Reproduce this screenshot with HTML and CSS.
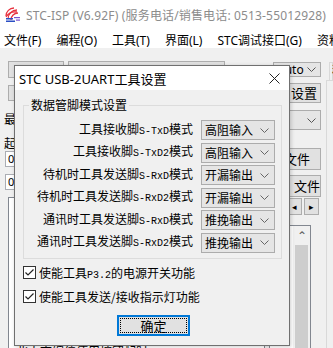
FILE: index.html
```html
<!DOCTYPE html>
<html lang="zh-CN">
  <head>
    <meta charset="UTF-8" />
    <title>STC-ISP</title>
    <link rel="stylesheet" href="styles.css">
  </head>
  <body>
    <div class="app">
      <div class="titlebar">
        <svg class="logo" width="16" height="16" viewBox="0 0 16 16">
          <path d="M1 9 A8 8 0 0 1 9 1" fill="none" stroke="#e8323f" stroke-width="1.3" />
          <path d="M1 6 A11 11 0 0 1 12 1" fill="none" stroke="#e8323f" stroke-width="1.3" transform="translate(0 4)" />
          <path d="M3 12 A9 9 0 0 1 12 3" fill="none" stroke="#e8323f" stroke-width="1.3" />
          <path d="M6 13 A7 7 0 0 1 13 6" fill="none" stroke="#e8323f" stroke-width="1.3" />
          <rect x="1" y="11" width="7" height="1.5" fill="#2b4fc4" />
          <rect x="1" y="13.5" width="9" height="1.5" fill="#2b4fc4" />
          <rect x="9" y="10" width="6" height="1.2" fill="#7a4fd0" />
          <rect x="11" y="12.5" width="4" height="1.2" fill="#7a4fd0" />
        </svg>
        <span class="apptitle">STC-ISP (V6.92F) (服务电话/销售电话: 0513-55012928)</span>
      </div>
      <div class="menubar">
        <span>文件(F)</span>
        <span>编程(O)</span>
        <span>工具(T)</span>
        <span>界面(L)</span>
        <span>STC调试接口(G)</span>
        <span>资料</span>
      </div>

      <div class="workspace">
        <div class="col-left">
          <div class="ctl-row">
            <div class="wbtn w56"></div>
            <div class="wbtn w157"></div>
          </div>
          <div class="ctl-row r2">
            <div class="wbtn w60"></div>
          </div>
          <div class="lbl l1">最低波特</div>
          <div class="lbl l2">起始地址</div>
          <div class="field f1">0x0000</div>
          <div class="field f2">0x0000</div>
          <div class="listbox">
            <div>&nbsp;</div><div>&nbsp;</div><div>&nbsp;</div><div>&nbsp;</div><div>&nbsp;</div>
            <div>&nbsp;</div><div>&nbsp;</div><div>&nbsp;</div><div>&nbsp;</div>
            <div>北大志编位使用按钮配时</div>
          </div>
        </div>

        <div class="col-right">
          <div class="wsel s1"><span>Auto</span><svg width="9" height="5" viewBox="0 0 9 5"><path d="M0.5 0.5 L4.5 4.5 L8.5 0.5" fill="none" stroke="#555" /></svg></div>
          <div class="wbtn b1">设置</div>
          <div class="wsel s2"><span></span><svg width="9" height="5" viewBox="0 0 9 5"><path d="M0.5 0.5 L4.5 4.5 L8.5 0.5" fill="none" stroke="#555" /></svg></div>
          <div class="wbtn b2">文件</div>
          <div class="wbtn b3">文件</div>
          <div class="arrows">
            <div class="abtn">&#9666;</div>
            <div class="abtn">&#9656;</div>
          </div>
          <div class="logbox">
            <div class="vscroll">
              <div class="sup">&#8963;</div>
              <div class="thumb"></div>
            </div>
          </div>
        </div>

        <div class="col-far">
          <div class="tab">程序</div>
          <div class="tabpanel">
            <div class="panelbox"></div>
          </div>
        </div>
      </div>

      <div class="dialog">
        <div class="dlg-title">
          <span>STC USB-2UART工具设置</span>
          <svg class="close" width="11" height="11" viewBox="0 0 11 11">
            <path d="M0.5 0.5 L10.5 10.5 M10.5 0.5 L0.5 10.5" stroke="#222" stroke-width="1" />
          </svg>
        </div>
        <div class="dlg-body">
          <fieldset class="group">
            <legend>数据管脚模式设置</legend>
            <div class="rows">
              <div class="row">
                <span class="rlabel">工具接收脚<span class="en">S-TxD</span>模式</span>
                <div class="combo"><span>高阻输入</span><svg width="9" height="5" viewBox="0 0 9 5"><path d="M0.5 0.5 L4.5 4.5 L8.5 0.5" fill="none" stroke="#666" /></svg></div>
              </div>
              <div class="row">
                <span class="rlabel">工具接收脚<span class="en">S-TxD2</span>模式</span>
                <div class="combo"><span>高阻输入</span><svg width="9" height="5" viewBox="0 0 9 5"><path d="M0.5 0.5 L4.5 4.5 L8.5 0.5" fill="none" stroke="#666" /></svg></div>
              </div>
              <div class="row">
                <span class="rlabel">待机时工具发送脚<span class="en">S-RxD</span>模式</span>
                <div class="combo"><span>开漏输出</span><svg width="9" height="5" viewBox="0 0 9 5"><path d="M0.5 0.5 L4.5 4.5 L8.5 0.5" fill="none" stroke="#666" /></svg></div>
              </div>
              <div class="row">
                <span class="rlabel">待机时工具发送脚<span class="en">S-RxD2</span>模式</span>
                <div class="combo"><span>开漏输出</span><svg width="9" height="5" viewBox="0 0 9 5"><path d="M0.5 0.5 L4.5 4.5 L8.5 0.5" fill="none" stroke="#666" /></svg></div>
              </div>
              <div class="row">
                <span class="rlabel">通讯时工具发送脚<span class="en">S-RxD</span>模式</span>
                <div class="combo"><span>推挽输出</span><svg width="9" height="5" viewBox="0 0 9 5"><path d="M0.5 0.5 L4.5 4.5 L8.5 0.5" fill="none" stroke="#666" /></svg></div>
              </div>
              <div class="row">
                <span class="rlabel">通讯时工具发送脚<span class="en">S-RxD2</span>模式</span>
                <div class="combo"><span>推挽输出</span><svg width="9" height="5" viewBox="0 0 9 5"><path d="M0.5 0.5 L4.5 4.5 L8.5 0.5" fill="none" stroke="#666" /></svg></div>
              </div>
            </div>
          </fieldset>

          <div class="check">
            <span class="cbox"><svg width="11" height="11" viewBox="0 0 11 11"><path d="M1.5 5.5 L4 8 L9.5 2.5" fill="none" stroke="#222" stroke-width="1.2" /></svg></span>
            <span>使能工具<span class="en">P3.2</span>的电源开关功能</span>
          </div>
          <div class="check">
            <span class="cbox"><svg width="11" height="11" viewBox="0 0 11 11"><path d="M1.5 5.5 L4 8 L9.5 2.5" fill="none" stroke="#222" stroke-width="1.2" /></svg></span>
            <span>使能工具发送/接收指示灯功能</span>
          </div>

          <div class="okbtn">确定</div>
        </div>
      </div>
    </div>
  </body>
</html>
```

FILE: styles.css
```css
body {
  margin: 0px;
  font-family: "Noto Sans", "Noto Sans CJK SC", sans-serif;
  font-size: 12px;
  color: #000;
}
.app {
  position: relative;
  width: 333px;
  height: 348px;
  overflow: hidden;
  background-color: #f0f0f0;
}

/* main window */
.titlebar {
  display: flex;
  align-items: center;
  height: 31px;
  padding-left: 5px;
  background-color: #fff;
}
.logo {
  margin-top: -1px;
}
.apptitle {
  margin-left: 5px;
  color: #8c8c8c;
  font-size: 12px;
  line-height: 16px;
  letter-spacing: 0.15px;
  white-space: nowrap;
}
.menubar {
  display: flex;
  height: 17px;
  padding-left: 4px;
  gap: 15px;
  background-color: #fff;
  line-height: 20px;
  white-space: nowrap;
}
.workspace {
  display: flex;
  height: 300px;
}
.col-left {
  flex: 0 0 265px;
  display: flex;
  flex-direction: column;
}
.ctl-row {
  display: flex;
  gap: 4px;
  margin-top: 13px;
  padding-left: 8px;
}
.ctl-row.r2 {
  margin-top: 7px;
}
.wbtn {
  box-sizing: border-box;
  border: 1px solid #adadad;
  background-color: #e1e1e1;
  text-align: center;
  font-size: 12px;
  line-height: 15px;
  white-space: nowrap;
  overflow: hidden;
}
.w56 {
  width: 56px;
  height: 17px;
}
.w157 {
  width: 157px;
  height: 17px;
}
.w60 {
  width: 60px;
  height: 16px;
}
.lbl {
  padding-left: 4px;
  line-height: 14px;
  white-space: nowrap;
}
.l1 {
  margin-top: 12px;
}
.l2 {
  margin-top: 10px;
}
.field {
  box-sizing: border-box;
  width: 80px;
  height: 16px;
  margin-left: 5px;
  padding-left: 2px;
  border: 1px solid #abadb3;
  background-color: #fff;
  font-size: 11px;
  line-height: 14px;
}
.f2 {
  margin-top: 7px;
}
.listbox {
  flex: 1;
  margin: 7px 0 0 8px;
  padding: 2px 0 0 7px;
  border: 1px solid #828790;
  border-bottom: 0;
  background-color: #fff;
  line-height: 16px;
  font-size: 12px;
  overflow: hidden;
}
.col-right {
  flex: 0 0 48px;
  margin-left: 4px;
  display: flex;
  flex-direction: column;
  align-items: flex-end;
}
.wsel {
  box-sizing: border-box;
  display: flex;
  align-items: center;
  justify-content: space-between;
  width: 48px;
  padding: 0 4px 0 3px;
  border: 1px solid #acacac;
  background-color: #e5e5e5;
  font-size: 12px;
}
.s1 {
  height: 15px;
  margin-top: 14px;
}
.s2 {
  height: 20px;
  margin-top: 7px;
}
.b1 {
  width: 34px;
  height: 20px;
  margin-top: 6px;
  line-height: 18px;
  font-size: 13px;
}
.b2 {
  width: 48px;
  height: 22px;
  margin-top: 18px;
  line-height: 20px;
  font-size: 13px;
}
.b3 {
  width: 36px;
  height: 22px;
  margin-top: 5px;
  line-height: 20px;
  font-size: 13px;
  text-align: left;
  padding-left: 8px;
}
.arrows {
  display: flex;
  gap: 2px;
  margin: 1px 2px 0 0;
}
.abtn {
  box-sizing: border-box;
  width: 15px;
  height: 17px;
  border: 1px solid #adadad;
  background-color: #e1e1e1;
  font-size: 9px;
  line-height: 15px;
  text-align: center;
}
.logbox {
  flex: 1;
  width: 40px;
  margin: 10px 10px 0 0;
  display: flex;
  justify-content: flex-end;
  border: 1px solid #828790;
  border-bottom: 0;
  background-color: #fff;
}
.vscroll {
  width: 17px;
  display: flex;
  flex-direction: column;
  background-color: #f0f0f0;
}
.sup {
  height: 19px;
  text-align: center;
  font-size: 12px;
  line-height: 20px;
  color: #606060;
}
.thumb {
  flex: 1;
  margin: 0 2px;
  background-color: #cdcdcd;
}
.col-far {
  flex: 1 1 0;
  min-width: 0;
  margin-left: 5px;
  display: flex;
  flex-direction: column;
  overflow: hidden;
}
.tab {
  height: 18px;
  margin: 14px 0 0 3px;
  padding-left: 2px;
  border: 1px solid #d9d9d9;
  border-bottom: 0;
  box-sizing: border-box;
  font-size: 12px;
  line-height: 16px;
  white-space: nowrap;
}
.tabpanel {
  flex: 1;
  border-left: 1px solid #d9d9d9;
  border-top: 1px solid #d9d9d9;
  padding: 7px 0 0 7px;
  display: flex;
}
.panelbox {
  flex: 1;
  border: 1px solid #828790;
  border-right: 0;
  background-color: #fff;
}

/* dialog */
.dialog {
  position: absolute;
  left: 14px;
  top: 65px;
  width: 276px;
  height: 281px;
  box-sizing: border-box;
  border: 1px solid #707070;
  background-color: #f0f0f0;
  box-shadow: 1px 1px 4px rgba(0, 0, 0, 0.2);
  display: flex;
  flex-direction: column;
}
.dlg-title {
  display: flex;
  align-items: center;
  justify-content: space-between;
  height: 24px;
  padding: 0 9px 0 4px;
  background-color: #fff;
  font-size: 13px;
  white-space: nowrap;
}
.dlg-body {
  padding: 0 7px 0 8px;
  font-family: "Noto Sans CJK SC", sans-serif;
}
.group {
  margin: 7px 0 0 0;
  padding: 0;
  min-width: 0;
  border: 1px solid #dcdcdc;
}
.group legend {
  margin-left: 5px;
  padding: 0 2px;
  font-size: 12px;
  line-height: 16px;
}
.rows {
  display: flex;
  flex-direction: column;
  gap: 2.6px;
  padding: 7px 6px 5px 0;
}
.row {
  display: flex;
  justify-content: flex-end;
  align-items: center;
  gap: 8px;
  height: 20px;
}
.rlabel {
  font-size: 12px;
  line-height: 14px;
  white-space: nowrap;
}
.en {
  font-family: "Liberation Mono", monospace;
  font-size: 10px;
}
.combo {
  box-sizing: border-box;
  flex: 0 0 74px;
  display: flex;
  align-items: center;
  justify-content: space-between;
  height: 20px;
  padding: 0 5px 0 3px;
  border: 1px solid #acacac;
  background-color: #e5e5e5;
  font-size: 12px;
  line-height: 18px;
}
.check {
  display: flex;
  align-items: center;
  gap: 3px;
  height: 24px;
  font-size: 12px;
  white-space: nowrap;
}
.group + .check {
  margin-top: 2px;
}
.cbox {
  box-sizing: border-box;
  display: flex;
  align-items: center;
  justify-content: center;
  width: 13px;
  height: 13px;
  border: 1px solid #333;
  background-color: #fff;
}
.okbtn {
  box-sizing: border-box;
  width: 73px;
  height: 21px;
  margin: 6px 0 0 94px;
  border: 1px solid #0078d7;
  box-shadow: inset 0 0 0 1px #0078d7;
  background-color: #e1e1e1;
  outline: 1px dotted #000;
  outline-offset: -4px;
  text-align: center;
  font-size: 13px;
  line-height: 19px;
}
```
